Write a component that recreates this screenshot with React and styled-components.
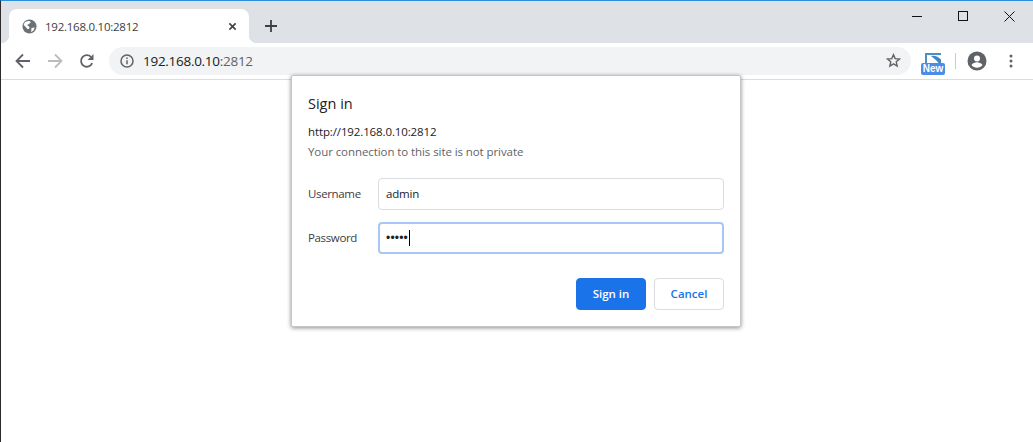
import React from "react";
import styled, { createGlobalStyle } from "styled-components";

const Global = createGlobalStyle`
  html, body { margin: 0; padding: 0; background: #fff; }
  body { font-family: "Open Sans", "Noto Sans", "Liberation Sans", sans-serif; }
  * { box-sizing: border-box; }
`;

const Window = styled.div`
  position: relative;
  width: 1033px;
  height: 442px;
  overflow: hidden;
  display: flex;
  flex-direction: column;
  background: #fff;
  border-top: 1px solid #2a8fdc;
  border-left: 1px solid #2b2b2b;
`;

const TabStrip = styled.div`
  height: 42px;
  flex: none;
  background: #dee1e6;
  display: flex;
  align-items: flex-end;
  padding-left: 8px;
`;

const Tab = styled.div`
  position: relative;
  width: 240px;
  height: 34px;
  background: #fff;
  border-radius: 8px 8px 0 0;
  display: flex;
  align-items: center;
  padding: 0 12px 0 13px;
  gap: 8px;
  &::before, &::after {
    content: "";
    position: absolute;
    bottom: 0;
    width: 8px;
    height: 8px;
  }
  &::before { left: -8px; background: radial-gradient(circle at 0 0, transparent 8px, #fff 8.5px); }
  &::after { right: -8px; background: radial-gradient(circle at 100% 0, transparent 8px, #fff 8.5px); }
`;

const TabTitle = styled.span`
  flex: 1;
  font-size: 11.5px;
  color: #3c4043;
  letter-spacing: -0.25px;
`;

const NewTab = styled.button`
  width: 28px;
  height: 28px;
  margin: 0 0 3px 8px;
  padding: 0;
  border: 0;
  background: transparent;
  display: flex;
  align-items: center;
  justify-content: center;
`;

const WindowControls = styled.div`
  margin-left: auto;
  align-self: flex-start;
  display: flex;
  padding-right: 1px;
`;

const WindowButton = styled.div`
  width: 46px;
  height: 30px;
  display: flex;
  align-items: center;
  justify-content: center;
`;

const Toolbar = styled.div`
  height: 37px;
  flex: none;
  background: #fff;
  border-bottom: 1px solid #dadce0;
  display: flex;
  align-items: center;
  padding: 0 0 1px 6px;
`;

const NavButton = styled.div`
  width: 32px;
  height: 28px;
  display: flex;
  align-items: center;
  justify-content: center;
`;

const Omnibox = styled.div`
  width: 802px;
  height: 28px;
  margin-left: 6px;
  border-radius: 14px;
  background: #f1f3f4;
  display: flex;
  align-items: center;
  padding: 0 10px 0 10px;
`;

const Url = styled.span`
  flex: 1;
  margin-left: 8px;
  font-size: 13.5px;
  color: #202124;
  letter-spacing: -0.28px;
`;

const UrlPort = styled.span`
  color: #5f6368;
`;

const ExtensionIcon = styled.div`
  width: 24px;
  height: 24px;
  margin: 4px 0 0 10px;
  padding-top: 2px;
  position: relative;
  display: flex;
  flex-direction: column;
  align-items: center;
`;

const NewBadge = styled.span`
  position: absolute;
  left: 0;
  bottom: 0;
  width: 24px;
  height: 12px;
  border-radius: 2px;
  background: #4a8ce8;
  color: #fff;
  font: bold 10px/12px "Liberation Sans", sans-serif;
  text-align: center;
`;

const Divider = styled.div`
  width: 1px;
  height: 16px;
  margin: 0 11px 0 10px;
  background: #c8ccd0;
`;

const ToolbarIcon = styled.div`
  width: 20px;
  height: 20px;
  display: flex;
  align-items: center;
  justify-content: center;
  margin-right: ${p => p.$gap || 0}px;
`;

const Dialog = styled.form`
  position: absolute;
  left: 290px;
  top: 74px;
  width: 450px;
  height: 252px;
  background: #fff;
  border: 1px solid #c6c6c6;
  border-radius: 2px;
  box-shadow: 0 1px 4px rgba(0, 0, 0, 0.45);
  padding: 17px 16px 16px 16px;
  display: flex;
  flex-direction: column;
`;

const Title = styled.h1`
  margin: 0;
  font-size: 14.5px;
  line-height: 22px;
  font-weight: 400;
  color: #202124;
`;

const Origin = styled.div`
  margin-top: 9px;
  font-size: 11.5px;
  line-height: 16px;
  color: #202124;
  letter-spacing: -0.12px;
`;

const Notice = styled.div`
  margin-top: 4px;
  font-size: 11.5px;
  line-height: 16px;
  color: #5f6368;
  letter-spacing: -0.08px;
`;

const Fields = styled.div`
  margin-top: 18px;
  display: grid;
  grid-template-columns: 70px 1fr;
  row-gap: 12px;
  align-items: center;
`;

const Label = styled.label`
  font-size: 11.5px;
  color: #3c4043;
  letter-spacing: -0.35px;
  padding-bottom: 2px;
`;

const Field = styled.div`
  height: 32px;
  border-radius: 4px;
  border: ${p => (p.$focused ? "2px solid #a8c7f5" : "1px solid #dadce0")};
  padding: 0 0 ${p => (p.$focused ? "0" : "2px")} ${p => (p.$focused ? "6px" : "7px")};
  display: flex;
  align-items: center;
  font-size: 11.5px;
  letter-spacing: -0.2px;
  color: #202124;
`;

const Dots = styled.span`
  font: 12px/1 "Liberation Sans", sans-serif;
  letter-spacing: 0.2px;
`;

const Caret = styled.span`
  width: 1px;
  height: 16px;
  background: #000;
  margin-left: 1px;
`;

const Actions = styled.div`
  margin-top: auto;
  display: flex;
  justify-content: flex-end;
  gap: 8px;
`;

const Button = styled.button`
  width: 70px;
  height: 32px;
  border-radius: 4px;
  border: 1px solid ${p => (p.$primary ? "#1a73e8" : "#dadce0")};
  background: ${p => (p.$primary ? "#1a73e8" : "#fff")};
  color: ${p => (p.$primary ? "#fff" : "#1a73e8")};
  font: 600 11.5px "Open Sans", sans-serif;
  padding: 0 0 2px;
`;

export default function App() {
  return (
    <>
      <Global />
      <Window>
        <TabStrip>
          <Tab>
            <svg width="15" height="15" viewBox="0 0 16 16">
              <circle cx="8" cy="8" r="7.500" fill="#6d7075" />
              <path d="M3 3.500c1.500-1 3.500-1.500 5-1.500L9.500 3.500 7 5.500 5.500 6.500 8 8.500 7.500 11 5.500 10.500 3 7.500 1.800 6.500C2 5.500 2.500 4.500 3 3.500ZM10 9.500l3.500-.5-1 3-2.800 2 .3-2.500Z" fill="#fff" />
            </svg>
            <TabTitle>192.168.0.10:2812</TabTitle>
            <svg width="9" height="9" viewBox="0 0 10 10">
              <path d="M1.500 1.500l7 7M8.500 1.500l-7 7" stroke="#3c4043" strokeWidth="1.700" />
            </svg>
          </Tab>
          <NewTab>
            <svg width="14" height="14" viewBox="0 0 14 14">
              <path d="M7 1v12M1 7h12" stroke="#3c4043" strokeWidth="1.800" />
            </svg>
          </NewTab>
          <WindowControls>
            <WindowButton>
              <svg width="10" height="10" viewBox="0 0 10 10"><path d="M0 5.500h10" stroke="#111" /></svg>
            </WindowButton>
            <WindowButton>
              <svg width="10" height="10" viewBox="0 0 10 10"><rect x=".5" y=".5" width="9" height="9" fill="none" stroke="#111" /></svg>
            </WindowButton>
            <WindowButton>
              <svg width="11" height="11" viewBox="0 0 11 11"><path d="M.5.5l10 10M10.500.5l-10 10" stroke="#111" /></svg>
            </WindowButton>
          </WindowControls>
        </TabStrip>
        <Toolbar>
          <NavButton>
            <svg width="16" height="16" viewBox="0 0 16 16">
              <path d="M15 8H2M8 1.500 1.500 8 8 14.500" fill="none" stroke="#5f6368" strokeWidth="1.800" />
            </svg>
          </NavButton>
          <NavButton>
            <svg width="16" height="16" viewBox="0 0 16 16">
              <path d="M1 8h13M8 1.500 14.500 8 8 14.500" fill="none" stroke="#babcbe" strokeWidth="1.800" />
            </svg>
          </NavButton>
          <NavButton>
            <svg width="16" height="16" viewBox="0 0 16 16">
              <path d="M13.200 10.200A5.800 5.800 0 1 1 12 3.900" fill="none" stroke="#5f6368" strokeWidth="1.800" />
              <path d="M14.500 1v6h-6z" fill="#5f6368" />
            </svg>
          </NavButton>
          <Omnibox>
            <svg width="16" height="16" viewBox="0 0 16 16">
              <circle cx="8" cy="8" r="6" fill="none" stroke="#5f6368" strokeWidth="1.500" />
              <path d="M8 7.200v4" stroke="#5f6368" strokeWidth="1.500" />
              <path d="M8 4.600v1.500" stroke="#5f6368" strokeWidth="1.500" />
            </svg>
            <Url>192.168.0.10<UrlPort>:2812</UrlPort></Url>
            <svg width="15" height="15" viewBox="0 0 16 16">
              <path d="M8 1.800l1.800 4.200 4.600.4-3.500 3 1 4.500L8 11.500l-3.900 2.400 1-4.500-3.500-3 4.600-.4z" fill="none" stroke="#5f6368" strokeWidth="1.500" />
            </svg>
          </Omnibox>
          <ExtensionIcon>
            <svg width="16" height="10" viewBox="0 0 16 10">
              <path d="M1 10V1h15" fill="none" stroke="#4f8fc0" strokeWidth="2" />
              <path d="M6 3c4-.8 7 .5 10 3.500V10h-2.500C12 7.500 9.500 6 6 3z" fill="#3f86c8" />
            </svg>
            <NewBadge>New</NewBadge>
          </ExtensionIcon>
          <Divider />
          <ToolbarIcon $gap={22}>
            <svg width="20" height="20" viewBox="0 0 20 20">
              <circle cx="10" cy="10" r="9.500" fill="#5f6368" />
              <circle cx="10" cy="7.500" r="3" fill="#fff" />
              <path d="M4.500 14c1.200-2 3.400-2.800 5.500-2.800s4.300.8 5.500 2.800c-1.300 1.700-3.300 2.800-5.500 2.800S5.800 15.700 4.500 14z" fill="#fff" />
            </svg>
          </ToolbarIcon>
          <svg width="4" height="14" viewBox="0 0 4 14">
            <circle cx="2" cy="2" r="1.500" fill="#5f6368" />
            <circle cx="2" cy="7" r="1.500" fill="#5f6368" />
            <circle cx="2" cy="12" r="1.500" fill="#5f6368" />
          </svg>
        </Toolbar>
        <Dialog onSubmit={e => e.preventDefault()}>
          <Title>Sign in</Title>
          <Origin>http://192.168.0.10:2812</Origin>
          <Notice>Your connection to this site is not private</Notice>
          <Fields>
            <Label>Username</Label>
            <Field>admin</Field>
            <Label>Password</Label>
            <Field $focused><Dots>•••••</Dots><Caret /></Field>
          </Fields>
          <Actions>
            <Button $primary type="button">Sign in</Button>
            <Button type="button">Cancel</Button>
          </Actions>
        </Dialog>
      </Window>
    </>
  );
}
